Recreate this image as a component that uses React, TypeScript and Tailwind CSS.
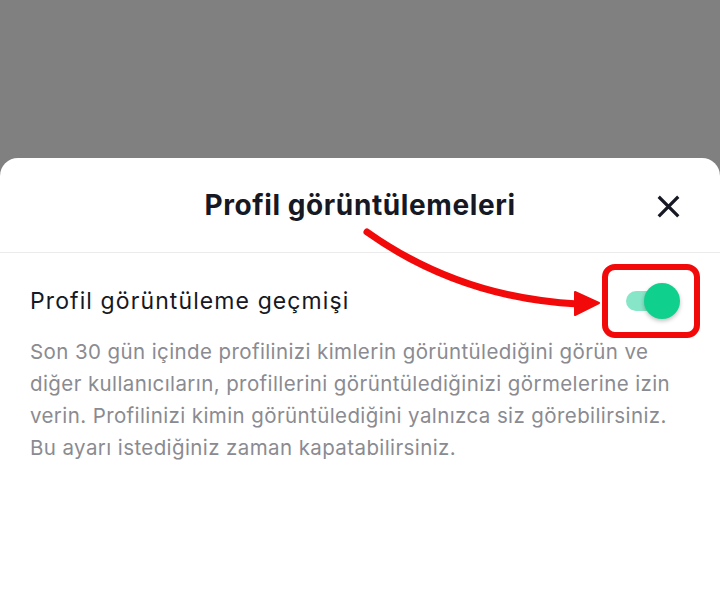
import React from 'react';

const descriptionLines = [
  'Son 30 gün içinde profilinizi kimlerin görüntülediğini görün ve',
  'diğer kullanıcıların, profillerini görüntülediğinizi görmelerine izin',
  'verin. Profilinizi kimin görüntülediğini yalnızca siz görebilirsiniz.',
  'Bu ayarı istediğiniz zaman kapatabilirsiniz.',
];

const App: React.FC = () => {
  return (
    <div className="relative flex h-[599px] w-[720px] flex-col overflow-hidden bg-[#808080] font-['Inter',sans-serif]">
      <div className="h-[158px] shrink-0" />
      {/* Bottom sheet */}
      <div className="flex flex-1 flex-col rounded-t-[18px] bg-white">
        <div className="relative flex h-[95px] shrink-0 items-center justify-center border-b border-[#ebebeb]">
          <h2 className="text-[28px] font-bold tracking-[0.6px] text-[#161823]">Profil görüntülemeleri</h2>
          <button className="absolute right-[40px] top-[37px] text-[#161823]">
            <svg width="23" height="23" viewBox="0 0 24 24" fill="none" stroke="currentColor" strokeWidth="3.4" strokeLinecap="square">
              <path d="M3 3L21 21M21 3L3 21" />
            </svg>
          </button>
        </div>

        <div className="flex items-center justify-between pl-[30px] pr-[20px] pt-[11px]">
          <span className="text-[23px] tracking-[1.1px] text-[#161823]">Profil görüntüleme geçmişi</span>
          {/* Toggle, highlighted */}
          <div className="flex h-[74px] w-[98px] items-center justify-center rounded-[13px] border-[6px] border-[#f20a0a]">
            <div className="relative ml-[-6px] h-[20px] w-[44px] rounded-full bg-[#88e6c8]">
              <div className="absolute right-[-10px] top-[-8px] h-[36px] w-[36px] rounded-full bg-[#10d08e] shadow-[0_2px_4px_rgba(0,0,0,0.25)]" />
            </div>
          </div>
        </div>

        <p className="mt-[-2px] whitespace-nowrap pl-[30px] text-[20.5px] leading-[32px] tracking-[0.4px] text-[#8a8b91]">
          {descriptionLines.map((line) => (
            <span key={line} className="block">{line}</span>
          ))}
        </p>
      </div>

      {/* Red annotation arrow */}
      <svg className="pointer-events-none absolute left-0 top-0" width="720" height="599" viewBox="0 0 720 599">
        <path d="M367 232 Q460 298 578 304" fill="none" stroke="#f20a0a" strokeWidth="7" strokeLinecap="round" />
        <path d="M575 292 L599 303 L575 315 Z" fill="#f20a0a" stroke="#f20a0a" strokeWidth="2" strokeLinejoin="round" />
      </svg>
    </div>
  );
};

export default App;
